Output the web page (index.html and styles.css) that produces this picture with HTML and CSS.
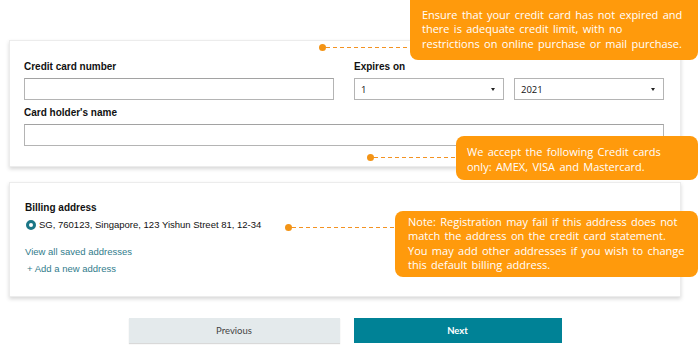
FILE: index.html
```html
<!DOCTYPE html>
<html lang="en">
<head>
    <meta charset="UTF-8">
    <meta name="viewport" content="width=device-width, initial-scale=1.0">
    <title>Payment details</title>
    <link rel="stylesheet" href="styles.css">
</head>
<body>

<div class="page">

    <!-- Card details -->
    <section class="card card-payment">
        <div class="field-row">
            <div class="field">
                <label class="field-label" for="card-number">Credit card number</label>
                <input class="text-input" id="card-number" type="text">
            </div>
            <div class="field">
                <span class="field-label">Expires on</span>
                <div class="select-row">
                    <div class="select-box"><span>1</span><span class="caret"></span></div>
                    <div class="select-box"><span>2021</span><span class="caret"></span></div>
                </div>
            </div>
        </div>
        <div class="field">
            <label class="field-label" for="holder-name">Card holder's name</label>
            <input class="text-input" id="holder-name" type="text">
        </div>
    </section>

    <!-- Billing address -->
    <section class="card card-billing">
        <div class="field-label">Billing address</div>
        <div class="address-option">
            <span class="radio"></span>
            <span>SG, 760123, Singapore, 123 Yishun Street 81, 12-34</span>
        </div>
        <a href="#" class="link link-view">View all saved addresses</a>
        <a href="#" class="link link-add">+ Add a new address</a>
    </section>

    <div class="actions">
        <button class="btn btn-secondary">Previous</button>
        <button class="btn btn-primary">Next</button>
    </div>

    <!-- Help callouts -->
    <div class="pointer pointer-expiry">
        <span class="dot"></span>
        <svg class="dash" width="84" height="1"><line x1="0" y1="0.5" x2="84" y2="0.5"/></svg>
    </div>
    <div class="callout callout-expiry">
        Ensure that your credit card has not expired and<br>
        there is adequate credit limit, with no<br>
        restrictions on online purchase or mail purchase.
    </div>

    <div class="pointer pointer-cards">
        <span class="dot"></span>
        <svg class="dash" width="82" height="1"><line x1="0" y1="0.5" x2="82" y2="0.5"/></svg>
    </div>
    <div class="callout callout-cards">
        We accept the following Credit cards<br>
        only: AMEX, VISA and Mastercard.
    </div>

    <div class="pointer pointer-address">
        <span class="dot"></span>
        <svg class="dash" width="103" height="1"><line x1="0" y1="0.5" x2="103" y2="0.5"/></svg>
    </div>
    <div class="callout callout-address">
        Note: Registration may fail if this address does not<br>
        match the address on the credit card statement.<br>
        You may add other addresses if you wish to change<br>
        this default billing address.
    </div>

</div>

</body>
</html>
```

FILE: styles.css
```css
:root {
    --orange: #ff9a0c;
    --orange-line: #f39222;
    --teal: #008296;
    --link: #327c8c;
    --text: #111;
}
body {
    margin: 0;
    background: #fff;
    font-family: 'Liberation Sans', Arial, sans-serif;
    color: var(--text);
}
.page {
    position: relative;
    width: 700px;
    height: 353px;
    overflow: hidden;
    padding-top: 40px;
    box-sizing: border-box;
}
.card {
    margin-left: 9px;
    width: 672px;
    box-sizing: border-box;
    background: #fff;
    border: 1px solid #ececec;
    box-shadow: 0 2px 4px rgba(0, 0, 0, 0.16);
}
.card-payment {
    height: 127px;
    padding: 20px 16px 0 14px;
}
.card-billing {
    margin-top: 15px;
    height: 115px;
    padding: 19px 16px 0 15px;
}
.field-row {
    display: grid;
    grid-template-columns: 310px 310px;
    column-gap: 20px;
    margin-bottom: 7px;
}
.field-label {
    display: block;
    font-size: 10px;
    font-weight: bold;
    line-height: 12px;
    margin-bottom: 5px;
}
.text-input {
    display: block;
    width: 100%;
    height: 22px;
    box-sizing: border-box;
    border: 1px solid #b4b4b4;
    border-top-color: #a2a2a2;
    margin: 0;
    padding: 0 6px;
    font: inherit;
}
.select-row {
    display: flex;
    gap: 10px;
}
.select-box {
    flex: 1;
    height: 22px;
    box-sizing: border-box;
    border: 1px solid #b4b4b4;
    display: flex;
    align-items: center;
    justify-content: space-between;
    padding: 0 8px 0 6px;
    font-size: 9.5px;
    font-family: 'Open Sans', sans-serif;
}
.caret {
    width: 0;
    height: 0;
    border-left: 2px solid transparent;
    border-right: 2px solid transparent;
    border-top: 3px solid #222;
}
.address-option {
    display: flex;
    align-items: center;
    gap: 3px;
    font-size: 9.5px;
    margin: 5px 0 16px 1px;
}
.radio {
    width: 4px;
    height: 4px;
    border-radius: 50%;
    border: 3px solid #1b7686;
    background: #fff;
    flex: none;
}
.link {
    display: block;
    font-size: 9.5px;
    color: var(--link);
    text-decoration: none;
    line-height: 12px;
}
.link-add {
    margin: 5px 0 0 2px;
}
.actions {
    display: flex;
    justify-content: center;
    gap: 14px;
    width: 672px;
    margin: 21px 0 0 9px;
}
.btn {
    width: 211px;
    height: 25px;
    border: none;
    font-family: 'Lato', sans-serif;
    font-size: 9.5px;
    cursor: pointer;
}
.btn-secondary {
    background: #e4eaec;
    color: #444;
    box-shadow: 0 1px 1px rgba(0, 0, 0, 0.15);
}
.btn-primary {
    width: 208px;
    background: var(--teal);
    color: #fff;
    font-weight: bold;
}

/* callouts sit on top of the form */
.callout {
    position: absolute;
    background: var(--orange);
    color: #fff;
    border-radius: 8px;
    font-family: 'Open Sans', sans-serif;
    font-size: 11px;
    line-height: 14.3px;
    box-sizing: border-box;
    word-spacing: 1.5px;
}
.callout-expiry {
    left: 410px;
    top: -8px;
    width: 288px;
    height: 68px;
    padding: 16px 0 0 12px;
}
.callout-cards {
    left: 456px;
    top: 136px;
    width: 242px;
    height: 44px;
    padding: 8px 0 0 11px;
    line-height: 15px;
}
.callout-address {
    left: 395px;
    top: 211px;
    width: 303px;
    height: 66px;
    padding: 4px 0 0 13px;
}
.pointer {
    position: absolute;
    display: flex;
    align-items: center;
    height: 7px;
}
.dot {
    width: 7px;
    height: 7px;
    border-radius: 50%;
    background: #f39416;
    flex: none;
}
.dash {
    display: block;
    flex: none;
}
.dash line {
    stroke: var(--orange-line);
    stroke-width: 1;
    stroke-dasharray: 4 3;
}
.pointer-expiry {
    left: 319px;
    top: 44px;
}
.pointer-cards {
    left: 367px;
    top: 154px;
}
.pointer-address {
    left: 285px;
    top: 224px;
}
```
